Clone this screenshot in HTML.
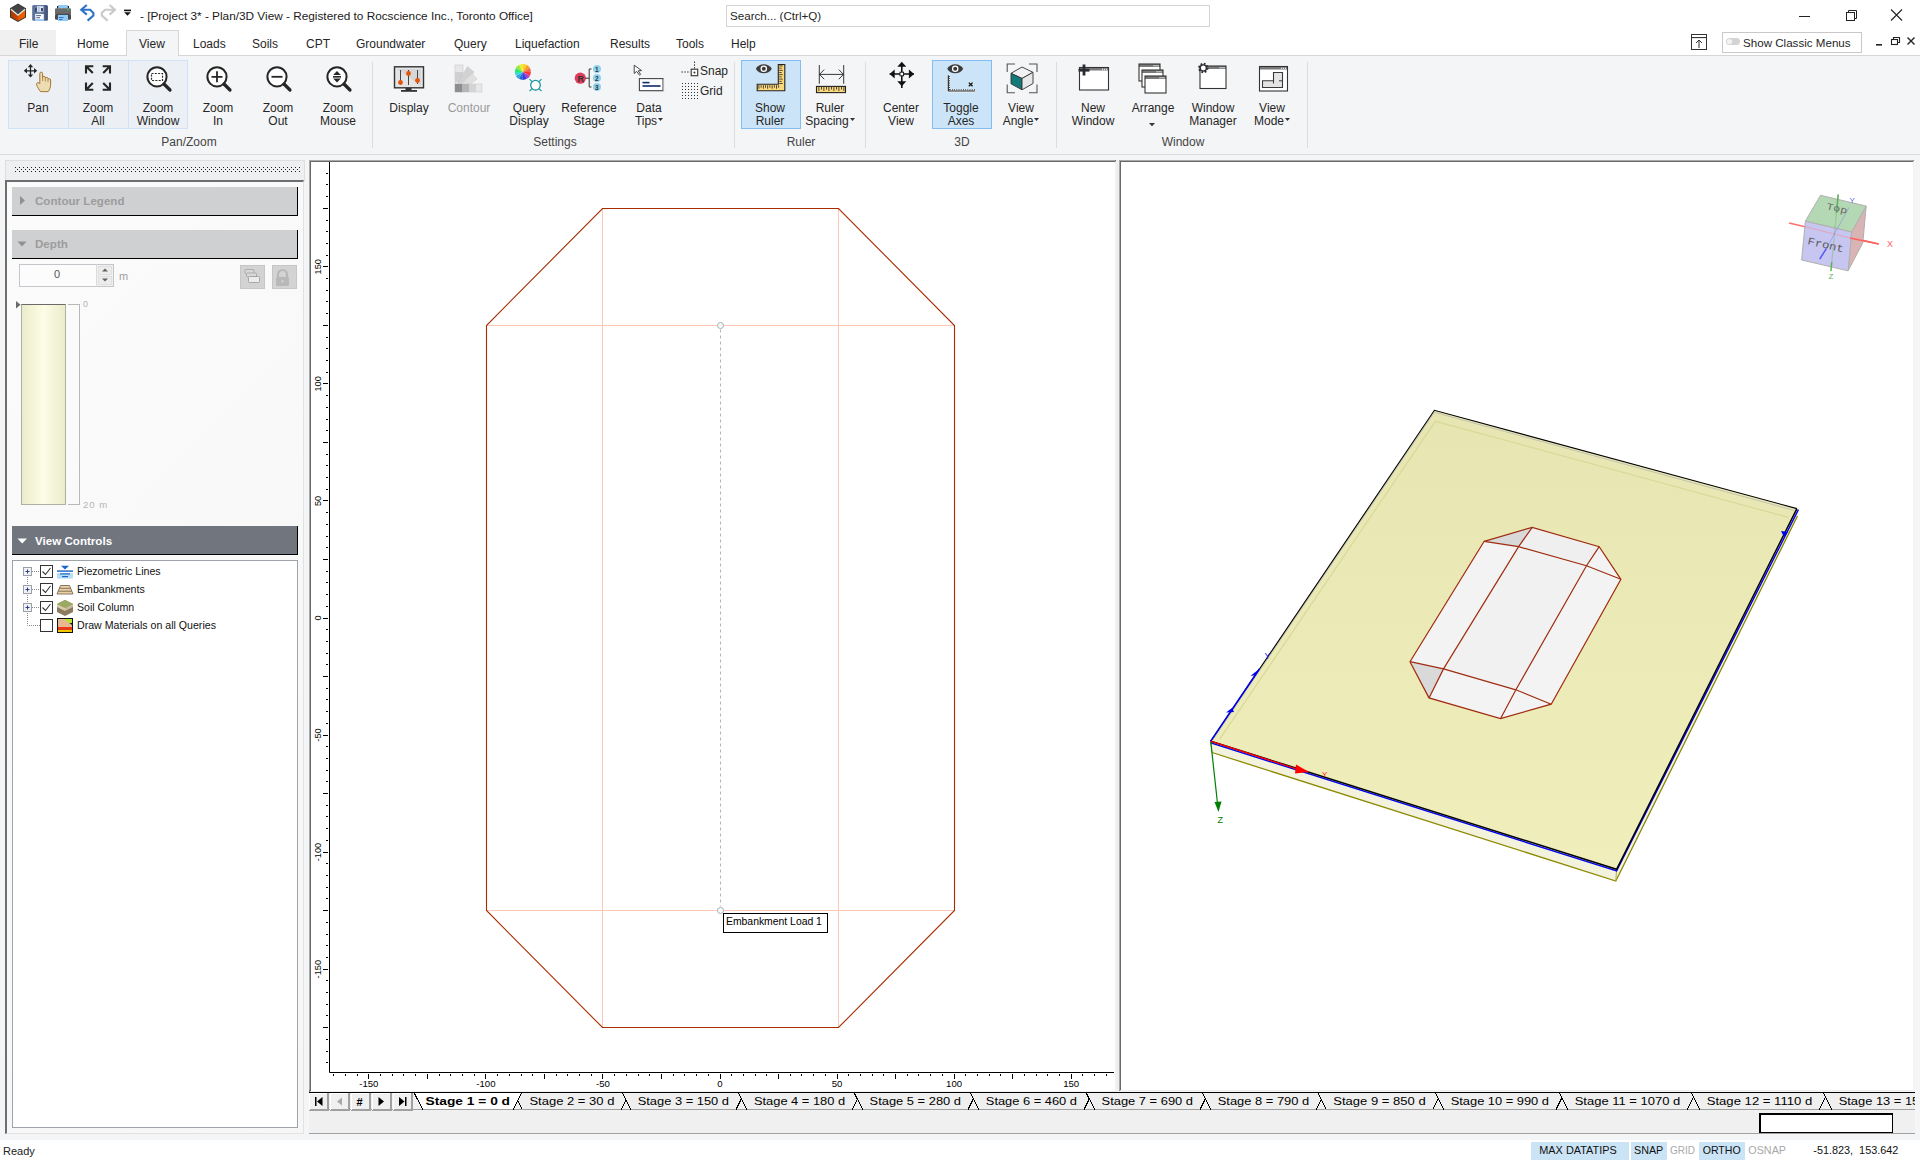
<!DOCTYPE html>
<html><head><meta charset="utf-8">
<style>
*{margin:0;padding:0;box-sizing:border-box}
html,body{width:1920px;height:1160px;overflow:hidden;background:#f4f5f7;font-family:"Liberation Sans",sans-serif;color:#1e1e1e}
.a{position:absolute}
.t{position:absolute;white-space:pre;line-height:1}
svg{position:absolute;overflow:visible}

</style></head><body>
<!-- ===== Title bar ===== -->
<div class="a" style="left:0;top:0;width:1920px;height:56px;background:#fff"></div>
<!-- app icon -->
<svg style="left:0;top:0" width="140" height="30">
 <defs><linearGradient id="orng" x1="0" x2="1"><stop offset="0" stop-color="#a83a00"/><stop offset="0.5" stop-color="#c84800"/><stop offset="0.55" stop-color="#e85800"/><stop offset="1" stop-color="#f06000"/></linearGradient>
 <linearGradient id="savg" x1="0" x2="1"><stop offset="0" stop-color="#5a6e94"/><stop offset="0.5" stop-color="#7088b0"/><stop offset="1" stop-color="#3a4870"/></linearGradient></defs>
 <polygon points="18,3.6 26,8.2 26,17.6 18,22 10,17.6 10,8.2" fill="#333"/>
 <polygon points="10.9,9.3 18,15.8 25.1,9.3 25.1,17 18,21 10.9,17" fill="url(#orng)"/>
 <polygon points="18,4.6 25,8.6 18,14.8 11,8.6" fill="#444"/>
 <path d="M11,9.2 L18,15.2 L25,9.2" fill="none" stroke="#e6eaee" stroke-width="1.3"/>
 <!-- save -->
 <rect x="32.2" y="5" width="15.7" height="15.8" rx="1.5" fill="url(#savg)"/>
 <rect x="37" y="6.2" width="6.5" height="5.6" fill="#dce4f0"/>
 <rect x="37.8" y="6.4" width="2" height="5.2" fill="#b8c8e0"/>
 <rect x="41.2" y="8" width="1.6" height="3.2" fill="#1a2248"/>
 <rect x="35.3" y="8" width="1.2" height="3.8" fill="#262e58"/>
 <rect x="35.2" y="14" width="8.6" height="6.8" fill="#fafbfd"/>
 <rect x="35.2" y="19.2" width="8.6" height="1.6" fill="#8cc4f0"/>
 <rect x="36.2" y="15.2" width="4.8" height="0.9" fill="#3c5080"/><rect x="36.2" y="17.3" width="3.8" height="0.9" fill="#3c5080"/>
 <!-- print -->
 <rect x="58" y="4.9" width="10" height="3.5" rx="0.6" fill="#90caf8"/>
 <rect x="57" y="6" width="1.2" height="2.5" fill="#222"/><rect x="67.8" y="6" width="1.2" height="2.5" fill="#222"/>
 <rect x="55" y="8.2" width="16" height="6.2" rx="1.2" fill="#6a6a6a"/>
 <rect x="55" y="13.8" width="16" height="6" rx="1.5" fill="#4a4a4a"/>
 <rect x="58" y="15" width="10" height="6" fill="#90caf8"/>
 <rect x="59" y="17.1" width="4.5" height="0.9" fill="#2a68b8"/><rect x="59" y="19" width="3.5" height="0.9" fill="#2a68b8"/>
 <circle cx="68" cy="9.6" r="0.9" fill="#22cc55"/>
 <!-- undo -->
 <path d="M86.8,5 L81.2,9.8 L86.8,14.6 M81.2,9.8 H90.2 L93.4,13 V15.5 L87.6,20.6" fill="none" stroke="#2f73c7" stroke-width="2.1"/>
 <!-- redo -->
 <path d="M109.6,5 L115,9.8 L109.6,14.6 M115,9.8 H105 L101.8,13 V15.5 L107.6,20.6" fill="none" stroke="#cacaca" stroke-width="2.1"/>
 <!-- qat dropdown -->
 <rect x="124" y="9.6" width="7" height="1.6" fill="#111"/>
 <polygon points="124.2,12.2 130.8,12.2 127.5,15.8" fill="#111"/>
</svg>
<div class="t" style="left:140px;top:11px;font-size:11.8px;color:#1a1a1a">- [Project 3* - Plan/3D View - Registered to Rocscience Inc., Toronto Office]</div>
<div class="a" style="left:726px;top:5px;width:484px;height:22px;border:1px solid #d4d4d4;background:#fff"></div>
<div class="t" style="left:730px;top:10px;font-size:11.6px;color:#262626">Search... (Ctrl+Q)</div>
<!-- window controls -->
<svg style="left:1780px;top:0" width="140" height="30">
 <rect x="19" y="16" width="11" height="1" fill="#222"/>
 <rect x="66.5" y="12.5" width="8" height="8" fill="none" stroke="#222" stroke-width="1"/>
 <path d="M68.5,12.5 V10.5 H76.5 V18.5 H74.5" fill="none" stroke="#222" stroke-width="1"/>
 <path d="M111,9.5 L122,20.5 M122,9.5 L111,20.5" stroke="#222" stroke-width="1.1"/>
</svg>

<!-- ===== Tab row ===== -->
<div class="a" style="left:0;top:30px;width:56px;height:25px;background:#f0f0f0"></div>
<div class="a" style="left:0;top:55px;width:1920px;height:1px;background:#d6d6d6"></div>
<div class="a" style="left:126px;top:30px;width:53px;height:27px;background:#f4f5f7;border:1px solid #d6d6d6;border-bottom:none"></div>
<div class="t" style="left:19px;top:38px;font-size:12px;color:#262626">File</div>
<div class="t" style="left:77px;top:38px;font-size:12px;color:#262626">Home</div>
<div class="t" style="left:139px;top:38px;font-size:12px;color:#262626">View</div>
<div class="t" style="left:193px;top:38px;font-size:12px;color:#262626">Loads</div>
<div class="t" style="left:252px;top:38px;font-size:12px;color:#262626">Soils</div>
<div class="t" style="left:306px;top:38px;font-size:12px;color:#262626">CPT</div>
<div class="t" style="left:356px;top:38px;font-size:12px;color:#262626">Groundwater</div>
<div class="t" style="left:454px;top:38px;font-size:12px;color:#262626">Query</div>
<div class="t" style="left:515px;top:38px;font-size:12px;color:#262626">Liquefaction</div>
<div class="t" style="left:610px;top:38px;font-size:12px;color:#262626">Results</div>
<div class="t" style="left:676px;top:38px;font-size:12px;color:#262626">Tools</div>
<div class="t" style="left:731px;top:38px;font-size:12px;color:#262626">Help</div>
<!-- right side of tab row -->
<svg style="left:1680px;top:30px" width="240" height="25">
 <rect x="11.5" y="4.5" width="15" height="15" fill="none" stroke="#333" stroke-width="1"/>
 <rect x="11.5" y="7.5" width="15" height="0.1" stroke="#333" stroke-width="1"/>
 <path d="M19,18 V10 M16,13 L19,10 L22,13" fill="none" stroke="#333" stroke-width="1"/>
 <rect x="42.5" y="2.5" width="139" height="20" fill="#fff" stroke="#c8c8c8" stroke-width="1"/>
 <rect x="46" y="8" width="14" height="7" rx="3.5" fill="#d4d4d4"/>
 <circle cx="49.5" cy="11.5" r="2.6" fill="#f4f4f4"/>
 <rect x="196" y="14" width="6" height="1.6" fill="#222"/>
 <rect x="211.5" y="9.5" width="6" height="5" fill="none" stroke="#222" stroke-width="1.1"/>
 <path d="M213.5,9.5 V7.5 H219.5 V12.5 H217.5" fill="none" stroke="#222" stroke-width="1.1"/>
 <path d="M227.5,7.5 L234.5,14.5 M234.5,7.5 L227.5,14.5" stroke="#222" stroke-width="1.4"/>
</svg>
<div class="t" style="left:1743px;top:37px;font-size:11.6px;color:#262626">Show Classic Menus</div>
<div class="a" style="left:0;top:56px;width:1920px;height:98px;background:#f4f5f7"></div>
<div class="a" style="left:0;top:154px;width:1920px;height:1px;background:#d9dadc"></div>
<div class="a" style="left:0;top:155px;width:1920px;height:5px;background:#f4f5f7"></div>
<div class="a" style="left:8px;top:60px;width:180px;height:69px;background:#eceff4;border:1px solid #cfe2f7"></div>
<div class="a" style="left:68px;top:61px;width:1px;height:67px;background:#cfe2f7"></div>
<div class="a" style="left:128px;top:61px;width:1px;height:67px;background:#cfe2f7"></div>
<div class="a" style="left:741px;top:60px;width:60px;height:69px;background:#cce4f7;border:1px solid #86bdf0"></div>
<div class="a" style="left:932px;top:60px;width:60px;height:69px;background:#cce4f7;border:1px solid #86bdf0"></div>
<div class="a" style="left:372px;top:62px;width:1px;height:86px;background:#dcdde0"></div>
<div class="a" style="left:734px;top:62px;width:1px;height:86px;background:#dcdde0"></div>
<div class="a" style="left:865px;top:62px;width:1px;height:86px;background:#dcdde0"></div>
<div class="a" style="left:1056px;top:62px;width:1px;height:86px;background:#dcdde0"></div>
<div class="a" style="left:1307px;top:62px;width:1px;height:86px;background:#dcdde0"></div>
<div class="t" style="left:-22px;width:120px;text-align:center;top:102.0px;font-size:12px;line-height:13px;color:#262626">Pan</div>
<div class="t" style="left:38px;width:120px;text-align:center;top:102.0px;font-size:12px;line-height:13px;color:#262626">Zoom</div>
<div class="t" style="left:38px;width:120px;text-align:center;top:114.5px;font-size:12px;line-height:13px;color:#262626">All</div>
<div class="t" style="left:98px;width:120px;text-align:center;top:102.0px;font-size:12px;line-height:13px;color:#262626">Zoom</div>
<div class="t" style="left:98px;width:120px;text-align:center;top:114.5px;font-size:12px;line-height:13px;color:#262626">Window</div>
<div class="t" style="left:158px;width:120px;text-align:center;top:102.0px;font-size:12px;line-height:13px;color:#262626">Zoom</div>
<div class="t" style="left:158px;width:120px;text-align:center;top:114.5px;font-size:12px;line-height:13px;color:#262626">In</div>
<div class="t" style="left:218px;width:120px;text-align:center;top:102.0px;font-size:12px;line-height:13px;color:#262626">Zoom</div>
<div class="t" style="left:218px;width:120px;text-align:center;top:114.5px;font-size:12px;line-height:13px;color:#262626">Out</div>
<div class="t" style="left:278px;width:120px;text-align:center;top:102.0px;font-size:12px;line-height:13px;color:#262626">Zoom</div>
<div class="t" style="left:278px;width:120px;text-align:center;top:114.5px;font-size:12px;line-height:13px;color:#262626">Mouse</div>
<div class="t" style="left:349px;width:120px;text-align:center;top:102.0px;font-size:12px;line-height:13px;color:#262626">Display</div>
<div class="t" style="left:409px;width:120px;text-align:center;top:102.0px;font-size:12px;line-height:13px;color:#9a9a9a">Contour</div>
<div class="t" style="left:469px;width:120px;text-align:center;top:102.0px;font-size:12px;line-height:13px;color:#262626">Query</div>
<div class="t" style="left:469px;width:120px;text-align:center;top:114.5px;font-size:12px;line-height:13px;color:#262626">Display</div>
<div class="t" style="left:529px;width:120px;text-align:center;top:102.0px;font-size:12px;line-height:13px;color:#262626">Reference</div>
<div class="t" style="left:529px;width:120px;text-align:center;top:114.5px;font-size:12px;line-height:13px;color:#262626">Stage</div>
<div class="t" style="left:589px;width:120px;text-align:center;top:102.0px;font-size:12px;line-height:13px;color:#262626">Data</div>
<div class="t" style="left:589px;width:120px;text-align:center;top:114.5px;font-size:12px;line-height:13px;color:#262626">Tips<svg style="position:relative;display:inline-block;vertical-align:baseline;margin-left:1px;top:-3px" width="5" height="4"><polygon points="0,0 5,0 2.5,3" fill="#333"/></svg></div>
<div class="t" style="left:710px;width:120px;text-align:center;top:102.0px;font-size:12px;line-height:13px;color:#262626">Show</div>
<div class="t" style="left:710px;width:120px;text-align:center;top:114.5px;font-size:12px;line-height:13px;color:#262626">Ruler</div>
<div class="t" style="left:770px;width:120px;text-align:center;top:102.0px;font-size:12px;line-height:13px;color:#262626">Ruler</div>
<div class="t" style="left:770px;width:120px;text-align:center;top:114.5px;font-size:12px;line-height:13px;color:#262626">Spacing<svg style="position:relative;display:inline-block;vertical-align:baseline;margin-left:1px;top:-3px" width="5" height="4"><polygon points="0,0 5,0 2.5,3" fill="#333"/></svg></div>
<div class="t" style="left:841px;width:120px;text-align:center;top:102.0px;font-size:12px;line-height:13px;color:#262626">Center</div>
<div class="t" style="left:841px;width:120px;text-align:center;top:114.5px;font-size:12px;line-height:13px;color:#262626">View</div>
<div class="t" style="left:901px;width:120px;text-align:center;top:102.0px;font-size:12px;line-height:13px;color:#262626">Toggle</div>
<div class="t" style="left:901px;width:120px;text-align:center;top:114.5px;font-size:12px;line-height:13px;color:#262626">Axes</div>
<div class="t" style="left:961px;width:120px;text-align:center;top:102.0px;font-size:12px;line-height:13px;color:#262626">View</div>
<div class="t" style="left:961px;width:120px;text-align:center;top:114.5px;font-size:12px;line-height:13px;color:#262626">Angle<svg style="position:relative;display:inline-block;vertical-align:baseline;margin-left:1px;top:-3px" width="5" height="4"><polygon points="0,0 5,0 2.5,3" fill="#333"/></svg></div>
<div class="t" style="left:1033px;width:120px;text-align:center;top:102.0px;font-size:12px;line-height:13px;color:#262626">New</div>
<div class="t" style="left:1033px;width:120px;text-align:center;top:114.5px;font-size:12px;line-height:13px;color:#262626">Window</div>
<div class="t" style="left:1093px;width:120px;text-align:center;top:102.0px;font-size:12px;line-height:13px;color:#262626">Arrange</div>
<div class="t" style="left:1153px;width:120px;text-align:center;top:102.0px;font-size:12px;line-height:13px;color:#262626">Window</div>
<div class="t" style="left:1153px;width:120px;text-align:center;top:114.5px;font-size:12px;line-height:13px;color:#262626">Manager</div>
<div class="t" style="left:1212px;width:120px;text-align:center;top:102.0px;font-size:12px;line-height:13px;color:#262626">View</div>
<div class="t" style="left:1212px;width:120px;text-align:center;top:114.5px;font-size:12px;line-height:13px;color:#262626">Mode<svg style="position:relative;display:inline-block;vertical-align:baseline;margin-left:1px;top:-3px" width="5" height="4"><polygon points="0,0 5,0 2.5,3" fill="#333"/></svg></div>
<svg style="left:1149px;top:122.5px" width="6" height="4"><polygon points="0,0 6,0 3,3.2" fill="#333"/></svg>
<div class="t" style="left:129px;width:120px;text-align:center;top:136px;font-size:12px;line-height:13px;color:#444">Pan/Zoom</div>
<div class="t" style="left:495px;width:120px;text-align:center;top:136px;font-size:12px;line-height:13px;color:#444">Settings</div>
<div class="t" style="left:741px;width:120px;text-align:center;top:136px;font-size:12px;line-height:13px;color:#444">Ruler</div>
<div class="t" style="left:902px;width:120px;text-align:center;top:136px;font-size:12px;line-height:13px;color:#444">3D</div>
<div class="t" style="left:1123px;width:120px;text-align:center;top:136px;font-size:12px;line-height:13px;color:#444">Window</div>
<div class="t" style="left:700px;top:65px;font-size:12px;line-height:13px;color:#262626">Snap</div>
<div class="t" style="left:700px;top:85px;font-size:12px;line-height:13px;color:#262626">Grid</div>
<svg style="left:22px;top:64px" width="32" height="32">
<path d="M8.5,1 V12.5 M3,6.8 H14" stroke="#262626" stroke-width="1.3"/>
<polygon points="8.5,0 5.8,3.2 11.2,3.2" fill="#262626"/><polygon points="8.5,13.6 5.8,10.4 11.2,10.4" fill="#262626"/>
<polygon points="1.8,6.8 5,4.1 5,9.5" fill="#262626"/><polygon points="15.2,6.8 12,4.1 12,9.5" fill="#262626"/>
<path d="M17.8,9.5 C17.8,7.6 20.6,7.6 20.6,9.5 V13.4 C20.9,12 23.1,12 23.3,13.6 V14.2 C23.6,13 25.8,13 26,14.6 V15.3 C26.4,14.3 28.6,14.5 28.6,16 V20.5 C28.6,23.5 27.6,25.5 26.2,27.6 H18.5 C17,25.5 15.2,22.8 14.6,20.8 C14.2,19.2 15.5,18.2 16.6,18.8 L17.8,19.6 Z" fill="#eedcb4" stroke="#9a6a20" stroke-width="0.9"/>
<path d="M20.6,13.4 V17 M23.3,14.2 V17.5 M26,15.3 V18" stroke="#9a6a20" stroke-width="0.7"/>
</svg>
<svg style="left:82px;top:64px" width="32" height="32" fill="none" stroke="#262626" stroke-width="2.1">
<path d="M4,9.5 V2.2 H11.3 M4.8,3 L10.8,9"/>
<path d="M28,9.5 V2.2 H20.7 M27.2,3 L21.2,9"/>
<path d="M4,18.5 V25.8 H11.3 M4.8,25 L10.8,19"/>
<path d="M28,18.5 V25.8 H20.7 M27.2,25 L21.2,19"/>
</svg>
<svg style="left:142px;top:64px" width="32" height="32">
<circle cx="15" cy="12.8" r="9.6" fill="#fff" stroke="#262626" stroke-width="2"/>
<path d="M22,20 L28,26" stroke="#262626" stroke-width="3.2" stroke-linecap="round"/><rect x="9.5" y="9.5" width="11" height="7" fill="none" stroke="#262626" stroke-width="1.2" stroke-dasharray="2,1.3"/></svg>
<svg style="left:202px;top:64px" width="32" height="32">
<circle cx="15" cy="12.8" r="9.6" fill="#fff" stroke="#262626" stroke-width="2"/>
<path d="M22,20 L28,26" stroke="#262626" stroke-width="3.2" stroke-linecap="round"/><path d="M9.5,12.8 H20.5 M15,7.3 V18.3" stroke="#262626" stroke-width="1.8"/></svg>
<svg style="left:262px;top:64px" width="32" height="32">
<circle cx="15" cy="12.8" r="9.6" fill="#fff" stroke="#262626" stroke-width="2"/>
<path d="M22,20 L28,26" stroke="#262626" stroke-width="3.2" stroke-linecap="round"/><path d="M9.5,12.8 H20.5" stroke="#262626" stroke-width="1.8"/></svg>
<svg style="left:322px;top:64px" width="32" height="32">
<circle cx="15" cy="12.8" r="9.6" fill="#fff" stroke="#262626" stroke-width="2"/>
<path d="M22,20 L28,26" stroke="#262626" stroke-width="3.2" stroke-linecap="round"/><polygon points="15,7 11.2,11 18.8,11" fill="#262626"/><rect x="11" y="12" width="8" height="1.6" fill="#262626"/><polygon points="15,18.6 11.2,14.6 18.8,14.6" fill="#262626"/></svg>
<svg style="left:393px;top:64px" width="32" height="32">
<rect x="1.5" y="2.8" width="29" height="21" fill="#e4e4e4" stroke="#333" stroke-width="1.4"/>
<polygon points="4,5 28,5 28,22" fill="#d6d6d6"/>
<path d="M7.5,6 V20.5 M15.5,6 V21 M24.5,6 V20" stroke="#333" stroke-width="0.9"/>
<circle cx="7.5" cy="18.5" r="2.4" fill="#e2540a"/><circle cx="15.5" cy="9.5" r="2.4" fill="#e2540a"/><circle cx="24.5" cy="16.5" r="2.4" fill="#e2540a"/>
<rect x="12.5" y="24" width="6" height="2.5" fill="#333"/><rect x="8" y="26" width="16" height="1.8" fill="#333"/>
</svg>
<svg style="left:453px;top:64px" width="32" height="32">
<rect x="2" y="1" width="8" height="27" fill="#e6e6e6" stroke="#c8c8c8" stroke-width="0.6"/>
<rect x="2" y="8" width="8" height="10" fill="#cfcfcf"/>
<polygon points="3,22 14.5,2.5 21,8 9,25" fill="#d2d2d2" stroke="#c4c4c4" stroke-width="0.5"/>
<polygon points="4,24 19,9.5 24,15 8,27" fill="#e0e0e0" stroke="#c4c4c4" stroke-width="0.5"/>
<rect x="2" y="20" width="27" height="8" fill="#e8e8e8" stroke="#c8c8c8" stroke-width="0.6"/>
<rect x="2" y="20" width="7" height="8" fill="#8e8e8e"/><rect x="9" y="20" width="7" height="8" fill="#b5b5b5"/><rect x="16" y="20" width="7" height="8" fill="#d4d4d4"/>
</svg>
<svg style="left:513px;top:64px" width="32" height="32"><path d="M9.9,7.9 L9.90,-0.10 A8,8 0 0 1 13.90,0.97 Z" fill="#ffd21e"/><path d="M9.9,7.9 L13.90,0.97 A8,8 0 0 1 16.83,3.90 Z" fill="#ff9a1e"/><path d="M9.9,7.9 L16.83,3.90 A8,8 0 0 1 17.90,7.90 Z" fill="#f06a50"/><path d="M9.9,7.9 L17.90,7.90 A8,8 0 0 1 16.83,11.90 Z" fill="#ff3838"/><path d="M9.9,7.9 L16.83,11.90 A8,8 0 0 1 13.90,14.83 Z" fill="#a43cdc"/><path d="M9.9,7.9 L13.90,14.83 A8,8 0 0 1 9.90,15.90 Z" fill="#3a3ad8"/><path d="M9.9,7.9 L9.90,15.90 A8,8 0 0 1 5.90,14.83 Z" fill="#1e6ad2"/><path d="M9.9,7.9 L5.90,14.83 A8,8 0 0 1 2.97,11.90 Z" fill="#3a9af0"/><path d="M9.9,7.9 L2.97,11.90 A8,8 0 0 1 1.90,7.90 Z" fill="#32e0c8"/><path d="M9.9,7.9 L1.90,7.90 A8,8 0 0 1 2.97,3.90 Z" fill="#2ee86a"/><path d="M9.9,7.9 L2.97,3.90 A8,8 0 0 1 5.90,0.97 Z" fill="#9ae63a"/><path d="M9.9,7.9 L5.90,0.97 A8,8 0 0 1 9.90,-0.10 Z" fill="#e6f03a"/>
<circle cx="22.5" cy="21.2" r="4.8" fill="#fff" stroke="#1e9aa0" stroke-width="1.3"/>
<path d="M16.5,15.2 L19.2,17.9 M28.5,15.2 L25.8,17.9 M16.5,27.2 L19.2,24.5 M28.5,27.2 L25.8,24.5" stroke="#1e9aa0" stroke-width="1.2"/>
</svg>
<svg style="left:573px;top:64px" width="32" height="32">
<circle cx="7.3" cy="14.2" r="5.6" fill="#e03c5c"/>
<text x="4.6" y="17.6" font-family="Liberation Sans" font-weight="bold" font-size="9" fill="#333">R</text>
<path d="M12.5,14.2 H16 M18.5,5 H16.2 V23 H18.5" fill="none" stroke="#333" stroke-width="1"/>
<circle cx="24" cy="5" r="4" fill="#8fd2ee"/><circle cx="24" cy="14" r="4" fill="#8fd2ee"/><circle cx="24" cy="23" r="4" fill="#8fd2ee"/>
<text x="22" y="7.5" font-family="Liberation Sans" font-weight="bold" font-size="6.5" fill="#333">1</text>
<text x="22" y="16.5" font-family="Liberation Sans" font-weight="bold" font-size="6.5" fill="#333">2</text>
<text x="22" y="25.5" font-family="Liberation Sans" font-weight="bold" font-size="6.5" fill="#333">3</text>
</svg>
<svg style="left:633px;top:64px" width="32" height="32">
<path d="M1.2,1.2 L1.2,9.5 L3.6,7.4 L6.5,11.2 L7.6,10.4 L5.2,6.8 L8.6,6.6 Z" fill="#fff" stroke="#333" stroke-width="0.9"/>
<rect x="6.4" y="14.6" width="23.6" height="12" fill="#fff" stroke="#444" stroke-width="1.1"/>
<rect x="9.5" y="17.8" width="7" height="1.6" fill="#102c6c"/><rect x="9.5" y="21.2" width="18" height="1.6" fill="#102c6c"/>
<path d="M30.6,15.5 V27.3 H7.5" fill="none" stroke="#bbb" stroke-width="0.8"/>
</svg>
<svg style="left:681px;top:61px" width="20" height="40">
<path d="M13.5,0.5 V7.5 M0.5,11 H9" stroke="#333" stroke-width="1" stroke-dasharray="1.5,1.3"/>
<rect x="10.2" y="8.2" width="6.5" height="6.5" fill="#fff" stroke="#333" stroke-width="1.1"/>
<circle cx="13.45" cy="11.45" r="1" fill="#333"/><rect x="1" y="22" width="1" height="1" fill="#333"/><rect x="1" y="25" width="1" height="1" fill="#333"/><rect x="1" y="28" width="1" height="1" fill="#333"/><rect x="1" y="31" width="1" height="1" fill="#333"/><rect x="1" y="34" width="1" height="1" fill="#333"/><rect x="1" y="37" width="1" height="1" fill="#333"/><rect x="4" y="22" width="1" height="1" fill="#333"/><rect x="4" y="25" width="1" height="1" fill="#333"/><rect x="4" y="28" width="1" height="1" fill="#333"/><rect x="4" y="31" width="1" height="1" fill="#333"/><rect x="4" y="34" width="1" height="1" fill="#333"/><rect x="4" y="37" width="1" height="1" fill="#333"/><rect x="7" y="22" width="1" height="1" fill="#333"/><rect x="7" y="25" width="1" height="1" fill="#333"/><rect x="7" y="28" width="1" height="1" fill="#333"/><rect x="7" y="31" width="1" height="1" fill="#333"/><rect x="7" y="34" width="1" height="1" fill="#333"/><rect x="7" y="37" width="1" height="1" fill="#333"/><rect x="10" y="22" width="1" height="1" fill="#333"/><rect x="10" y="25" width="1" height="1" fill="#333"/><rect x="10" y="28" width="1" height="1" fill="#333"/><rect x="10" y="31" width="1" height="1" fill="#333"/><rect x="10" y="34" width="1" height="1" fill="#333"/><rect x="10" y="37" width="1" height="1" fill="#333"/><rect x="13" y="22" width="1" height="1" fill="#333"/><rect x="13" y="25" width="1" height="1" fill="#333"/><rect x="13" y="28" width="1" height="1" fill="#333"/><rect x="13" y="31" width="1" height="1" fill="#333"/><rect x="13" y="34" width="1" height="1" fill="#333"/><rect x="13" y="37" width="1" height="1" fill="#333"/><rect x="16" y="22" width="1" height="1" fill="#333"/><rect x="16" y="25" width="1" height="1" fill="#333"/><rect x="16" y="28" width="1" height="1" fill="#333"/><rect x="16" y="31" width="1" height="1" fill="#333"/><rect x="16" y="34" width="1" height="1" fill="#333"/><rect x="16" y="37" width="1" height="1" fill="#333"/>
</svg>
<svg style="left:755px;top:64px" width="32" height="32"><path d="M0.8,4.7 C3.8,-1.2999999999999998 13.8,-1.2999999999999998 16.8,4.7 C13.8,10.7 3.8,10.7 0.8,4.7 Z" fill="#3c3c3c"/><circle cx="8.8" cy="4.7" r="3.3" fill="#fff"/><circle cx="8.8" cy="4.7" r="2" fill="#3c3c3c"/>
<path d="M23.3,0.5 H29.8 V26.7 H2.2 V20.3 H23.3 Z" fill="#fbd97a" stroke="#222" stroke-width="1.1"/><rect x="3.5" y="21.2" width="0.8" height="3.5" fill="#222"/><rect x="5.7" y="21.2" width="0.8" height="2.5" fill="#222"/><rect x="7.9" y="21.2" width="0.8" height="3.5" fill="#222"/><rect x="10.1" y="21.2" width="0.8" height="2.5" fill="#222"/><rect x="12.3" y="21.2" width="0.8" height="3.5" fill="#222"/><rect x="14.5" y="21.2" width="0.8" height="2.5" fill="#222"/><rect x="16.7" y="21.2" width="0.8" height="3.5" fill="#222"/><rect x="18.9" y="21.2" width="0.8" height="2.5" fill="#222"/><rect x="21.1" y="21.2" width="0.8" height="3.5" fill="#222"/><rect x="23.3" y="21.2" width="0.8" height="2.5" fill="#222"/><rect x="24.2" y="1.5" width="3.5" height="0.8" fill="#222"/><rect x="24.2" y="3.7" width="2.5" height="0.8" fill="#222"/><rect x="24.2" y="5.9" width="3.5" height="0.8" fill="#222"/><rect x="24.2" y="8.1" width="2.5" height="0.8" fill="#222"/><rect x="24.2" y="10.3" width="3.5" height="0.8" fill="#222"/><rect x="24.2" y="12.5" width="2.5" height="0.8" fill="#222"/><rect x="24.2" y="14.7" width="3.5" height="0.8" fill="#222"/><rect x="24.2" y="16.9" width="2.5" height="0.8" fill="#222"/><rect x="24.2" y="19.1" width="3.5" height="0.8" fill="#222"/>
</svg>
<svg style="left:815px;top:64px" width="32" height="32">
<path d="M4.3,1 V19.8 M28.7,1 V19.8 M4.5,10.4 H28.5 M9.2,5.6 L4.5,10.4 L9.2,15.2 M23.8,5.6 L28.5,10.4 L23.8,15.2" fill="none" stroke="#222" stroke-width="0.9"/>
<rect x="1.5" y="22.4" width="29" height="6.2" fill="#fbd97a" stroke="#222" stroke-width="1.1"/><rect x="3.5" y="23" width="0.8" height="4" fill="#222"/><rect x="6.0" y="23" width="0.8" height="2.5" fill="#222"/><rect x="8.5" y="23" width="0.8" height="4" fill="#222"/><rect x="11.0" y="23" width="0.8" height="2.5" fill="#222"/><rect x="13.5" y="23" width="0.8" height="4" fill="#222"/><rect x="16.0" y="23" width="0.8" height="2.5" fill="#222"/><rect x="18.5" y="23" width="0.8" height="4" fill="#222"/><rect x="21.0" y="23" width="0.8" height="2.5" fill="#222"/><rect x="23.5" y="23" width="0.8" height="4" fill="#222"/><rect x="26.0" y="23" width="0.8" height="2.5" fill="#222"/><rect x="28.5" y="23" width="0.8" height="4" fill="#222"/>
</svg>
<svg style="left:885px;top:64px" width="32" height="32">
<path d="M16.8,1 V24 M4.6,10 H29" stroke="#111" stroke-width="1.6"/>
<polygon points="16.8,-2.3 12.3,2.8 21.3,2.8" fill="#111"/><polygon points="16.8,22.3 12.3,17.2 21.3,17.2" fill="#111"/>
<polygon points="4.6,10 9.7,5.5 9.7,14.5" fill="#111"/><polygon points="29,10 23.9,5.5 23.9,14.5" fill="#111"/>
<rect x="15" y="8.2" width="3.6" height="3.6" fill="#fff" stroke="#111" stroke-width="0.9"/>
</svg>
<svg style="left:946px;top:64px" width="32" height="32"><path d="M1.2,4.8 C4.2,-1.2000000000000002 14.2,-1.2000000000000002 17.2,4.8 C14.2,10.8 4.2,10.8 1.2,4.8 Z" fill="#3c3c3c"/><circle cx="9.2" cy="4.8" r="3.3" fill="#fff"/><circle cx="9.2" cy="4.8" r="2" fill="#3c3c3c"/>
<path d="M2.3,11.3 V27 H28.8" fill="none" stroke="#fff" stroke-width="2.6"/>
<path d="M2.3,11.3 V27 H28.8" fill="none" stroke="#222" stroke-width="1.2"/><rect x="3.8" y="25.2" width="0.8" height="1.2" fill="#222"/><rect x="6.0" y="25.2" width="0.8" height="1.2" fill="#222"/><rect x="8.2" y="25.2" width="0.8" height="1.2" fill="#222"/><rect x="10.4" y="25.2" width="0.8" height="1.2" fill="#222"/><rect x="12.6" y="25.2" width="0.8" height="1.2" fill="#222"/><rect x="14.8" y="25.2" width="0.8" height="1.2" fill="#222"/><rect x="17.0" y="25.2" width="0.8" height="1.2" fill="#222"/><rect x="19.2" y="25.2" width="0.8" height="1.2" fill="#222"/><rect x="21.4" y="25.2" width="0.8" height="1.2" fill="#222"/><rect x="23.6" y="25.2" width="0.8" height="1.2" fill="#222"/><rect x="25.8" y="25.2" width="0.8" height="1.2" fill="#222"/><rect x="28.0" y="25.2" width="0.8" height="1.2" fill="#222"/><rect x="2.8" y="12.0" width="1.2" height="0.8" fill="#222"/><rect x="2.8" y="14.2" width="1.2" height="0.8" fill="#222"/><rect x="2.8" y="16.4" width="1.2" height="0.8" fill="#222"/><rect x="2.8" y="18.6" width="1.2" height="0.8" fill="#222"/><rect x="2.8" y="20.8" width="1.2" height="0.8" fill="#222"/><rect x="2.8" y="23.0" width="1.2" height="0.8" fill="#222"/><rect x="2.8" y="25.2" width="1.2" height="0.8" fill="#222"/>
<path d="M22.8,18.6 L26.6,22.2 M26.6,18.6 L22.8,22.2" stroke="#111" stroke-width="1.3"/>
</svg>
<svg style="left:1006px;top:64px" width="32" height="32">
<path d="M1.2,8 V0 H9 M23,0 H31 V8 M1.2,20.5 V28.7 H9 M23,28.7 H31 V20.5" fill="none" stroke="#555" stroke-width="1.1"/>
<polygon points="5,9.3 16,3 27,8.3 16,14.5" fill="#f2f2f2" stroke="#333" stroke-width="0.9"/>
<polygon points="5,9.3 16,14.5 16,25.8 5,19.8" fill="#137a7a" stroke="#333" stroke-width="0.9"/>
<polygon points="16,14.5 27,8.3 27,19.5 16,25.8" fill="#e8e8e8" stroke="#333" stroke-width="0.9"/>
</svg>
<svg style="left:1077px;top:64px" width="32" height="32">
<rect x="2.5" y="3.5" width="29" height="22.5" fill="#fff"/><rect x="2.5" y="3.5" width="29" height="3" fill="#7a7a7a"/><rect x="29.0" y="4.7" width="1.1" height="1.1" fill="#fff"/><rect x="27.0" y="4.7" width="1.1" height="1.1" fill="#fff"/><rect x="25.0" y="4.7" width="1.1" height="1.1" fill="#fff"/><rect x="2.5" y="3.5" width="29" height="22.5" fill="none" stroke="#333" stroke-width="1.1"/>
<rect x="1.5" y="4.8" width="11" height="2.8" fill="#2b2b33"/><rect x="5.6" y="0.5" width="2.8" height="11" fill="#2b2b33"/>
</svg>
<svg style="left:1137px;top:64px" width="32" height="32">
<rect x="2" y="0" width="21" height="17" fill="#fff"/><rect x="2" y="0" width="21" height="3" fill="#7a7a7a"/><rect x="20.5" y="1.2" width="1.1" height="1.1" fill="#fff"/><rect x="18.5" y="1.2" width="1.1" height="1.1" fill="#fff"/><rect x="16.5" y="1.2" width="1.1" height="1.1" fill="#fff"/><rect x="2" y="0" width="21" height="17" fill="none" stroke="#333" stroke-width="1.1"/><rect x="5" y="6" width="21" height="17" fill="#fff"/><rect x="5" y="6" width="21" height="3" fill="#7a7a7a"/><rect x="23.5" y="7.2" width="1.1" height="1.1" fill="#fff"/><rect x="21.5" y="7.2" width="1.1" height="1.1" fill="#fff"/><rect x="19.5" y="7.2" width="1.1" height="1.1" fill="#fff"/><rect x="5" y="6" width="21" height="17" fill="none" stroke="#333" stroke-width="1.1"/><rect x="8" y="12" width="21" height="17" fill="#fff"/><rect x="8" y="12" width="21" height="3" fill="#7a7a7a"/><rect x="26.5" y="13.2" width="1.1" height="1.1" fill="#fff"/><rect x="24.5" y="13.2" width="1.1" height="1.1" fill="#fff"/><rect x="22.5" y="13.2" width="1.1" height="1.1" fill="#fff"/><rect x="8" y="12" width="21" height="17" fill="none" stroke="#333" stroke-width="1.1"/>
</svg>
<svg style="left:1197px;top:64px" width="32" height="32">
<rect x="3" y="2" width="26" height="22.5" fill="#fff"/><rect x="3" y="2" width="26" height="3" fill="#7a7a7a"/><rect x="26.5" y="3.2" width="1.1" height="1.1" fill="#fff"/><rect x="24.5" y="3.2" width="1.1" height="1.1" fill="#fff"/><rect x="22.5" y="3.2" width="1.1" height="1.1" fill="#fff"/><rect x="3" y="2" width="26" height="22.5" fill="none" stroke="#333" stroke-width="1.1"/><circle cx="6.3" cy="4" r="4.2" fill="none" stroke="#2b2b33" stroke-width="2" stroke-dasharray="1.7,1.6"/><circle cx="6.3" cy="4" r="3.1" fill="#fff" stroke="#2b2b33" stroke-width="1.3"/>
</svg>
<svg style="left:1257px;top:64px" width="32" height="32">
<rect x="2.5" y="2.5" width="28" height="24.5" fill="#fff"/><rect x="2.5" y="2.5" width="28" height="3" fill="#7a7a7a"/><rect x="28.0" y="3.7" width="1.1" height="1.1" fill="#fff"/><rect x="26.0" y="3.7" width="1.1" height="1.1" fill="#fff"/><rect x="24.0" y="3.7" width="1.1" height="1.1" fill="#fff"/><rect x="2.5" y="2.5" width="28" height="24.5" fill="none" stroke="#333" stroke-width="1.1"/>
<path d="M16.5,8.5 H25.5 V23.5 H5.5 V16.8 H16.5 Z" fill="#e4e4e4" stroke="#3a3a3a" stroke-width="1.1"/>
<path d="M16.5,16.8 V19.5 M22,16.8 H25.5" stroke="#3a3a3a" stroke-width="1"/>
</svg>
<div class="a" style="left:5px;top:160px;width:300px;height:21px;background:#eeeff1;border:1px solid #dddee0"></div>
<svg style="left:0;top:0" width="310" height="190"><rect x="15" y="167" width="1" height="1" fill="#222"/><rect x="15" y="171" width="1" height="1" fill="#222"/><rect x="19" y="167" width="1" height="1" fill="#222"/><rect x="19" y="171" width="1" height="1" fill="#222"/><rect x="23" y="167" width="1" height="1" fill="#222"/><rect x="23" y="171" width="1" height="1" fill="#222"/><rect x="27" y="167" width="1" height="1" fill="#222"/><rect x="27" y="171" width="1" height="1" fill="#222"/><rect x="31" y="167" width="1" height="1" fill="#222"/><rect x="31" y="171" width="1" height="1" fill="#222"/><rect x="35" y="167" width="1" height="1" fill="#222"/><rect x="35" y="171" width="1" height="1" fill="#222"/><rect x="39" y="167" width="1" height="1" fill="#222"/><rect x="39" y="171" width="1" height="1" fill="#222"/><rect x="43" y="167" width="1" height="1" fill="#222"/><rect x="43" y="171" width="1" height="1" fill="#222"/><rect x="47" y="167" width="1" height="1" fill="#222"/><rect x="47" y="171" width="1" height="1" fill="#222"/><rect x="51" y="167" width="1" height="1" fill="#222"/><rect x="51" y="171" width="1" height="1" fill="#222"/><rect x="55" y="167" width="1" height="1" fill="#222"/><rect x="55" y="171" width="1" height="1" fill="#222"/><rect x="59" y="167" width="1" height="1" fill="#222"/><rect x="59" y="171" width="1" height="1" fill="#222"/><rect x="63" y="167" width="1" height="1" fill="#222"/><rect x="63" y="171" width="1" height="1" fill="#222"/><rect x="67" y="167" width="1" height="1" fill="#222"/><rect x="67" y="171" width="1" height="1" fill="#222"/><rect x="71" y="167" width="1" height="1" fill="#222"/><rect x="71" y="171" width="1" height="1" fill="#222"/><rect x="75" y="167" width="1" height="1" fill="#222"/><rect x="75" y="171" width="1" height="1" fill="#222"/><rect x="79" y="167" width="1" height="1" fill="#222"/><rect x="79" y="171" width="1" height="1" fill="#222"/><rect x="83" y="167" width="1" height="1" fill="#222"/><rect x="83" y="171" width="1" height="1" fill="#222"/><rect x="87" y="167" width="1" height="1" fill="#222"/><rect x="87" y="171" width="1" height="1" fill="#222"/><rect x="91" y="167" width="1" height="1" fill="#222"/><rect x="91" y="171" width="1" height="1" fill="#222"/><rect x="95" y="167" width="1" height="1" fill="#222"/><rect x="95" y="171" width="1" height="1" fill="#222"/><rect x="99" y="167" width="1" height="1" fill="#222"/><rect x="99" y="171" width="1" height="1" fill="#222"/><rect x="103" y="167" width="1" height="1" fill="#222"/><rect x="103" y="171" width="1" height="1" fill="#222"/><rect x="107" y="167" width="1" height="1" fill="#222"/><rect x="107" y="171" width="1" height="1" fill="#222"/><rect x="111" y="167" width="1" height="1" fill="#222"/><rect x="111" y="171" width="1" height="1" fill="#222"/><rect x="115" y="167" width="1" height="1" fill="#222"/><rect x="115" y="171" width="1" height="1" fill="#222"/><rect x="119" y="167" width="1" height="1" fill="#222"/><rect x="119" y="171" width="1" height="1" fill="#222"/><rect x="123" y="167" width="1" height="1" fill="#222"/><rect x="123" y="171" width="1" height="1" fill="#222"/><rect x="127" y="167" width="1" height="1" fill="#222"/><rect x="127" y="171" width="1" height="1" fill="#222"/><rect x="131" y="167" width="1" height="1" fill="#222"/><rect x="131" y="171" width="1" height="1" fill="#222"/><rect x="135" y="167" width="1" height="1" fill="#222"/><rect x="135" y="171" width="1" height="1" fill="#222"/><rect x="139" y="167" width="1" height="1" fill="#222"/><rect x="139" y="171" width="1" height="1" fill="#222"/><rect x="143" y="167" width="1" height="1" fill="#222"/><rect x="143" y="171" width="1" height="1" fill="#222"/><rect x="147" y="167" width="1" height="1" fill="#222"/><rect x="147" y="171" width="1" height="1" fill="#222"/><rect x="151" y="167" width="1" height="1" fill="#222"/><rect x="151" y="171" width="1" height="1" fill="#222"/><rect x="155" y="167" width="1" height="1" fill="#222"/><rect x="155" y="171" width="1" height="1" fill="#222"/><rect x="159" y="167" width="1" height="1" fill="#222"/><rect x="159" y="171" width="1" height="1" fill="#222"/><rect x="163" y="167" width="1" height="1" fill="#222"/><rect x="163" y="171" width="1" height="1" fill="#222"/><rect x="167" y="167" width="1" height="1" fill="#222"/><rect x="167" y="171" width="1" height="1" fill="#222"/><rect x="171" y="167" width="1" height="1" fill="#222"/><rect x="171" y="171" width="1" height="1" fill="#222"/><rect x="175" y="167" width="1" height="1" fill="#222"/><rect x="175" y="171" width="1" height="1" fill="#222"/><rect x="179" y="167" width="1" height="1" fill="#222"/><rect x="179" y="171" width="1" height="1" fill="#222"/><rect x="183" y="167" width="1" height="1" fill="#222"/><rect x="183" y="171" width="1" height="1" fill="#222"/><rect x="187" y="167" width="1" height="1" fill="#222"/><rect x="187" y="171" width="1" height="1" fill="#222"/><rect x="191" y="167" width="1" height="1" fill="#222"/><rect x="191" y="171" width="1" height="1" fill="#222"/><rect x="195" y="167" width="1" height="1" fill="#222"/><rect x="195" y="171" width="1" height="1" fill="#222"/><rect x="199" y="167" width="1" height="1" fill="#222"/><rect x="199" y="171" width="1" height="1" fill="#222"/><rect x="203" y="167" width="1" height="1" fill="#222"/><rect x="203" y="171" width="1" height="1" fill="#222"/><rect x="207" y="167" width="1" height="1" fill="#222"/><rect x="207" y="171" width="1" height="1" fill="#222"/><rect x="211" y="167" width="1" height="1" fill="#222"/><rect x="211" y="171" width="1" height="1" fill="#222"/><rect x="215" y="167" width="1" height="1" fill="#222"/><rect x="215" y="171" width="1" height="1" fill="#222"/><rect x="219" y="167" width="1" height="1" fill="#222"/><rect x="219" y="171" width="1" height="1" fill="#222"/><rect x="223" y="167" width="1" height="1" fill="#222"/><rect x="223" y="171" width="1" height="1" fill="#222"/><rect x="227" y="167" width="1" height="1" fill="#222"/><rect x="227" y="171" width="1" height="1" fill="#222"/><rect x="231" y="167" width="1" height="1" fill="#222"/><rect x="231" y="171" width="1" height="1" fill="#222"/><rect x="235" y="167" width="1" height="1" fill="#222"/><rect x="235" y="171" width="1" height="1" fill="#222"/><rect x="239" y="167" width="1" height="1" fill="#222"/><rect x="239" y="171" width="1" height="1" fill="#222"/><rect x="243" y="167" width="1" height="1" fill="#222"/><rect x="243" y="171" width="1" height="1" fill="#222"/><rect x="247" y="167" width="1" height="1" fill="#222"/><rect x="247" y="171" width="1" height="1" fill="#222"/><rect x="251" y="167" width="1" height="1" fill="#222"/><rect x="251" y="171" width="1" height="1" fill="#222"/><rect x="255" y="167" width="1" height="1" fill="#222"/><rect x="255" y="171" width="1" height="1" fill="#222"/><rect x="259" y="167" width="1" height="1" fill="#222"/><rect x="259" y="171" width="1" height="1" fill="#222"/><rect x="263" y="167" width="1" height="1" fill="#222"/><rect x="263" y="171" width="1" height="1" fill="#222"/><rect x="267" y="167" width="1" height="1" fill="#222"/><rect x="267" y="171" width="1" height="1" fill="#222"/><rect x="271" y="167" width="1" height="1" fill="#222"/><rect x="271" y="171" width="1" height="1" fill="#222"/><rect x="275" y="167" width="1" height="1" fill="#222"/><rect x="275" y="171" width="1" height="1" fill="#222"/><rect x="279" y="167" width="1" height="1" fill="#222"/><rect x="279" y="171" width="1" height="1" fill="#222"/><rect x="283" y="167" width="1" height="1" fill="#222"/><rect x="283" y="171" width="1" height="1" fill="#222"/><rect x="287" y="167" width="1" height="1" fill="#222"/><rect x="287" y="171" width="1" height="1" fill="#222"/><rect x="291" y="167" width="1" height="1" fill="#222"/><rect x="291" y="171" width="1" height="1" fill="#222"/><rect x="295" y="167" width="1" height="1" fill="#222"/><rect x="295" y="171" width="1" height="1" fill="#222"/><rect x="299" y="167" width="1" height="1" fill="#222"/><rect x="299" y="171" width="1" height="1" fill="#222"/><rect x="17" y="169" width="1" height="1" fill="#222"/><rect x="21" y="169" width="1" height="1" fill="#222"/><rect x="25" y="169" width="1" height="1" fill="#222"/><rect x="29" y="169" width="1" height="1" fill="#222"/><rect x="33" y="169" width="1" height="1" fill="#222"/><rect x="37" y="169" width="1" height="1" fill="#222"/><rect x="41" y="169" width="1" height="1" fill="#222"/><rect x="45" y="169" width="1" height="1" fill="#222"/><rect x="49" y="169" width="1" height="1" fill="#222"/><rect x="53" y="169" width="1" height="1" fill="#222"/><rect x="57" y="169" width="1" height="1" fill="#222"/><rect x="61" y="169" width="1" height="1" fill="#222"/><rect x="65" y="169" width="1" height="1" fill="#222"/><rect x="69" y="169" width="1" height="1" fill="#222"/><rect x="73" y="169" width="1" height="1" fill="#222"/><rect x="77" y="169" width="1" height="1" fill="#222"/><rect x="81" y="169" width="1" height="1" fill="#222"/><rect x="85" y="169" width="1" height="1" fill="#222"/><rect x="89" y="169" width="1" height="1" fill="#222"/><rect x="93" y="169" width="1" height="1" fill="#222"/><rect x="97" y="169" width="1" height="1" fill="#222"/><rect x="101" y="169" width="1" height="1" fill="#222"/><rect x="105" y="169" width="1" height="1" fill="#222"/><rect x="109" y="169" width="1" height="1" fill="#222"/><rect x="113" y="169" width="1" height="1" fill="#222"/><rect x="117" y="169" width="1" height="1" fill="#222"/><rect x="121" y="169" width="1" height="1" fill="#222"/><rect x="125" y="169" width="1" height="1" fill="#222"/><rect x="129" y="169" width="1" height="1" fill="#222"/><rect x="133" y="169" width="1" height="1" fill="#222"/><rect x="137" y="169" width="1" height="1" fill="#222"/><rect x="141" y="169" width="1" height="1" fill="#222"/><rect x="145" y="169" width="1" height="1" fill="#222"/><rect x="149" y="169" width="1" height="1" fill="#222"/><rect x="153" y="169" width="1" height="1" fill="#222"/><rect x="157" y="169" width="1" height="1" fill="#222"/><rect x="161" y="169" width="1" height="1" fill="#222"/><rect x="165" y="169" width="1" height="1" fill="#222"/><rect x="169" y="169" width="1" height="1" fill="#222"/><rect x="173" y="169" width="1" height="1" fill="#222"/><rect x="177" y="169" width="1" height="1" fill="#222"/><rect x="181" y="169" width="1" height="1" fill="#222"/><rect x="185" y="169" width="1" height="1" fill="#222"/><rect x="189" y="169" width="1" height="1" fill="#222"/><rect x="193" y="169" width="1" height="1" fill="#222"/><rect x="197" y="169" width="1" height="1" fill="#222"/><rect x="201" y="169" width="1" height="1" fill="#222"/><rect x="205" y="169" width="1" height="1" fill="#222"/><rect x="209" y="169" width="1" height="1" fill="#222"/><rect x="213" y="169" width="1" height="1" fill="#222"/><rect x="217" y="169" width="1" height="1" fill="#222"/><rect x="221" y="169" width="1" height="1" fill="#222"/><rect x="225" y="169" width="1" height="1" fill="#222"/><rect x="229" y="169" width="1" height="1" fill="#222"/><rect x="233" y="169" width="1" height="1" fill="#222"/><rect x="237" y="169" width="1" height="1" fill="#222"/><rect x="241" y="169" width="1" height="1" fill="#222"/><rect x="245" y="169" width="1" height="1" fill="#222"/><rect x="249" y="169" width="1" height="1" fill="#222"/><rect x="253" y="169" width="1" height="1" fill="#222"/><rect x="257" y="169" width="1" height="1" fill="#222"/><rect x="261" y="169" width="1" height="1" fill="#222"/><rect x="265" y="169" width="1" height="1" fill="#222"/><rect x="269" y="169" width="1" height="1" fill="#222"/><rect x="273" y="169" width="1" height="1" fill="#222"/><rect x="277" y="169" width="1" height="1" fill="#222"/><rect x="281" y="169" width="1" height="1" fill="#222"/><rect x="285" y="169" width="1" height="1" fill="#222"/><rect x="289" y="169" width="1" height="1" fill="#222"/><rect x="293" y="169" width="1" height="1" fill="#222"/><rect x="297" y="169" width="1" height="1" fill="#222"/></svg>
<div class="a" style="left:5px;top:180px;width:299px;height:954px;background:linear-gradient(135deg,#fbfbfb,#f6f6f6);border-top:2px solid #6e6e6e;border-left:2px solid #6e6e6e;border-right:1px solid #e2e2e2;border-bottom:1px solid #e2e2e2"></div>
<div class="a" style="left:12px;top:187px;width:286px;height:29px;background:#cfd0d2;border-right:1px solid #000;border-bottom:1px solid #000"></div>
<svg style="left:20px;top:196px" width="8" height="12"><polygon points="0,0 0,9 5,4.5" fill="#909090"/></svg>
<div class="t" style="left:35px;top:194px;font-size:11.6px;font-weight:bold;color:#9c9c9c;line-height:14px">Contour Legend</div>
<div class="a" style="left:12px;top:230px;width:286px;height:29px;background:#cfd0d2;border-right:1px solid #000;border-bottom:1px solid #000"></div>
<svg style="left:17px;top:241px" width="12" height="8"><polygon points="0.5,0.5 9.5,0.5 5,5.5" fill="#909090"/></svg>
<div class="t" style="left:35px;top:237px;font-size:11.6px;font-weight:bold;color:#9c9c9c;line-height:14px">Depth</div>
<div class="a" style="left:19px;top:264px;width:95px;height:23px;background:#fcfcfc;border:1px solid #c3c6ca"></div>
<div class="a" style="left:96px;top:264px;width:18px;height:23px;background:#f0f0f0;border:1px solid #c3c6ca;border-left:1px solid #dcdcdc"></div>
<div class="a" style="left:98px;top:266px;width:14px;height:9px;background:#ececec;border:1px solid #e0e0e0"></div>
<div class="a" style="left:98px;top:276px;width:14px;height:9px;background:#ececec;border:1px solid #e0e0e0"></div>
<svg style="left:100px;top:268px" width="12" height="16"><polygon points="5,0.5 2,3.5 8,3.5" fill="#606060"/><polygon points="5,13.5 2,10.5 8,10.5" fill="#606060"/></svg>
<div class="t" style="left:54px;top:269px;font-size:11px;color:#555">0</div>
<div class="t" style="left:119px;top:271px;font-size:11px;color:#a0a0a0">m</div>
<div class="a" style="left:240px;top:265px;width:25px;height:24px;background:#d3d3d3;border:1px solid #c6c6c6"></div>
<div class="a" style="left:272px;top:265px;width:25px;height:24px;background:#d3d3d3;border:1px solid #c6c6c6"></div>
<svg style="left:240px;top:265px" width="60" height="26">
<rect x="5" y="4.5" width="9" height="4" rx="1" fill="#d8d8d8" stroke="#a8a8a8" stroke-width="0.9"/>
<rect x="6.5" y="8" width="10" height="4" rx="1" fill="#d8d8d8" stroke="#a8a8a8" stroke-width="0.9"/>
<rect x="8.5" y="11.5" width="11" height="6" rx="1" fill="#ececec" stroke="#a0a0a0" stroke-width="0.9"/>
<path d="M38,12 V9.5 A4.5,4.5 0 0 1 47,9.5 V12" fill="none" stroke="#b8b8b8" stroke-width="2.2"/>
<rect x="36" y="12" width="13" height="9" rx="1.5" fill="#b8b8b8"/>
<circle cx="42.5" cy="16.3" r="1.2" fill="#cfcfcf"/>
</svg>
<svg style="left:14px;top:299px" width="12" height="12"><polygon points="2,2 2,9.5 6.5,5.75" fill="#6a6a6a"/></svg>
<div class="a" style="left:21px;top:304px;width:45px;height:201px;background:linear-gradient(90deg,#ebebcc,#fdfde6 50%,#ebebcc);border:1px solid #b0b0a0;border-top:1px solid #6a6a6a"></div>
<div class="a" style="left:68px;top:304px;width:12px;height:201px;border-top:1px solid #b8b8b8;border-right:1px solid #b8b8b8;border-bottom:1px solid #b8b8b8"></div>
<div class="t" style="left:83px;top:300px;font-size:9px;color:#b4b4b4">0</div>
<div class="t" style="left:83px;top:500px;font-size:9.5px;color:#b4b4b4;letter-spacing:1px">20 m</div>
<div class="a" style="left:12px;top:526px;width:286px;height:29px;background:#70757e;border-right:1px solid #000;border-bottom:1px solid #000"></div>
<svg style="left:17px;top:537.5px" width="12" height="8"><polygon points="0.5,0.5 10,0.5 5.25,5.5" fill="#fff"/></svg>
<div class="t" style="left:35px;top:533.5px;font-size:11.6px;font-weight:bold;color:#fff;line-height:14px">View Controls</div>
<div class="a" style="left:12px;top:560px;width:286px;height:568px;background:#fff;border:1px solid #9ea3aa"></div>
<svg style="left:0;top:0" width="310" height="640"><path d="M27.5,575 V625.5 H40 M32,571.5 H40 M32,589.5 H40 M32,607.5 H40" fill="none" stroke="#8a8a8a" stroke-width="1" stroke-dasharray="1,1"/><rect x="23.5" y="567.5" width="8" height="8" fill="#f2f2f2" stroke="#9aa0aa" stroke-width="1"/><path d="M25.5,571.5 H29.5 M27.5,569.5 V573.5" stroke="#2a3f8a" stroke-width="1"/><rect x="23.5" y="585.5" width="8" height="8" fill="#f2f2f2" stroke="#9aa0aa" stroke-width="1"/><path d="M25.5,589.5 H29.5 M27.5,587.5 V591.5" stroke="#2a3f8a" stroke-width="1"/><rect x="23.5" y="603.5" width="8" height="8" fill="#f2f2f2" stroke="#9aa0aa" stroke-width="1"/><path d="M25.5,607.5 H29.5 M27.5,605.5 V609.5" stroke="#2a3f8a" stroke-width="1"/><rect x="40.5" y="565.5" width="12" height="12" fill="#fff" stroke="#333" stroke-width="1"/><path d="M42.5,571.5 L45.5,574.5 L50.5,568.0" fill="none" stroke="#333" stroke-width="1.1"/><rect x="40.5" y="583.5" width="12" height="12" fill="#fff" stroke="#333" stroke-width="1"/><path d="M42.5,589.5 L45.5,592.5 L50.5,586.0" fill="none" stroke="#333" stroke-width="1.1"/><rect x="40.5" y="601.5" width="12" height="12" fill="#fff" stroke="#333" stroke-width="1"/><path d="M42.5,607.5 L45.5,610.5 L50.5,604.0" fill="none" stroke="#333" stroke-width="1.1"/><rect x="40.5" y="619.5" width="12" height="12" fill="#fff" stroke="#333" stroke-width="1"/>
<rect x="57" y="573.2" width="16" height="5.4" fill="#b8def6"/>
<polygon points="61,565.8 69,565.8 65,569.6" fill="#1a64c8"/>
<rect x="57" y="570.4" width="16" height="1.4" fill="#1a64c8"/><rect x="60" y="573.3" width="10" height="1.2" fill="#1a64c8"/><rect x="62" y="576" width="6" height="1.2" fill="#1a64c8"/>
<polygon points="60.5,585.5 69.5,585.5 73,594 57,594" fill="#ecd0a6" stroke="#6a5a48" stroke-width="0.8"/>
<path d="M59.3,588.3 H70.7 M58.2,591.2 H71.8" stroke="#6a5a48" stroke-width="0.8"/>
<polygon points="65,600 73,604 73,612 65,616 57,612 57,604" fill="#8a7a60"/>
<polygon points="65,600 73,604 65,608 57,604" fill="#9aaa60"/>
<polygon points="57,604 65,608 65,611 57,607" fill="#d8cca8"/><polygon points="73,604 65,608 65,611 73,607" fill="#c8bc98"/>
<rect x="57" y="618" width="16" height="15" fill="#111"/>
<rect x="58" y="619" width="14" height="4" fill="#b8e62a"/>
<polygon points="58,619 64,619 72,625 72,627 58,627" fill="#e8b890"/>
<rect x="58" y="627" width="14" height="3.5" fill="#e83a18"/>
<rect x="58" y="630" width="14" height="2" fill="#f0c800"/>
</svg>
<div class="t" style="left:77px;top:565px;font-size:10.6px;color:#111;line-height:13px">Piezometric Lines</div>
<div class="t" style="left:77px;top:583px;font-size:10.6px;color:#111;line-height:13px">Embankments</div>
<div class="t" style="left:77px;top:601px;font-size:10.6px;color:#111;line-height:13px">Soil Column</div>
<div class="t" style="left:77px;top:619px;font-size:10.6px;color:#111;line-height:13px">Draw Materials on all Queries</div>
<div class="a" style="left:309px;top:160px;width:808px;height:932px;background:#fff;border-top:2px solid #6a6a6a;border-left:2px solid #6a6a6a;border-right:2px solid #f2f2f2;border-bottom:1px solid #f0f0f0"></div>
<div class="a" style="left:309px;top:160px;width:806px;height:1px;background:#a8a8a8"></div>
<div class="a" style="left:309px;top:160px;width:1px;height:930px;background:#a8a8a8"></div>
<div class="a" style="left:1116px;top:160px;width:3px;height:931px;background:#efefef"></div>
<svg style="left:0;top:0" width="1920" height="1160"><path d="M329.5,162 V1072.5 H1114" fill="none" stroke="#000" stroke-width="1"/><path d="M326,1062.5 H328 M326,1051.5 H328 M326,1039.5 H328 M323,1027.5 H328 M326,1015.5 H328 M326,1004.5 H328 M326,992.5 H328 M326,980.5 H328 M323,969.5 H328 M326,957.5 H328 M326,945.5 H328 M326,934.5 H328 M326,922.5 H328 M323,910.5 H328 M326,898.5 H328 M326,887.5 H328 M326,875.5 H328 M326,863.5 H328 M323,852.5 H328 M326,840.5 H328 M326,828.5 H328 M326,816.5 H328 M326,805.5 H328 M323,793.5 H328 M326,781.5 H328 M326,770.5 H328 M326,758.5 H328 M326,746.5 H328 M323,735.5 H328 M326,723.5 H328 M326,711.5 H328 M326,699.5 H328 M326,688.5 H328 M323,676.5 H328 M326,664.5 H328 M326,653.5 H328 M326,641.5 H328 M326,629.5 H328 M323,618.5 H328 M326,606.5 H328 M326,594.5 H328 M326,582.5 H328 M326,571.5 H328 M323,559.5 H328 M326,547.5 H328 M326,536.5 H328 M326,524.5 H328 M326,512.5 H328 M323,500.5 H328 M326,489.5 H328 M326,477.5 H328 M326,465.5 H328 M326,454.5 H328 M323,442.5 H328 M326,430.5 H328 M326,419.5 H328 M326,407.5 H328 M326,395.5 H328 M323,383.5 H328 M326,372.5 H328 M326,360.5 H328 M326,348.5 H328 M326,337.5 H328 M323,325.5 H328 M326,313.5 H328 M326,301.5 H328 M326,290.5 H328 M326,278.5 H328 M323,266.5 H328 M326,255.5 H328 M326,243.5 H328 M326,231.5 H328 M326,220.5 H328 M323,208.5 H328 M326,196.5 H328 M326,184.5 H328 M326,173.5 H328 M333.5,1074 V1076 M345.5,1074 V1076 M357.5,1074 V1076 M368.5,1074 V1079 M380.5,1074 V1076 M392.5,1074 V1076 M403.5,1074 V1076 M415.5,1074 V1076 M427.5,1074 V1079 M439.5,1074 V1076 M450.5,1074 V1076 M462.5,1074 V1076 M474.5,1074 V1076 M485.5,1074 V1079 M497.5,1074 V1076 M509.5,1074 V1076 M521.5,1074 V1076 M532.5,1074 V1076 M544.5,1074 V1079 M556.5,1074 V1076 M567.5,1074 V1076 M579.5,1074 V1076 M591.5,1074 V1076 M602.5,1074 V1079 M614.5,1074 V1076 M626.5,1074 V1076 M638.5,1074 V1076 M649.5,1074 V1076 M661.5,1074 V1079 M673.5,1074 V1076 M684.5,1074 V1076 M696.5,1074 V1076 M708.5,1074 V1076 M720.5,1074 V1079 M731.5,1074 V1076 M743.5,1074 V1076 M755.5,1074 V1076 M766.5,1074 V1076 M778.5,1074 V1079 M790.5,1074 V1076 M801.5,1074 V1076 M813.5,1074 V1076 M825.5,1074 V1076 M837.5,1074 V1079 M848.5,1074 V1076 M860.5,1074 V1076 M872.5,1074 V1076 M883.5,1074 V1076 M895.5,1074 V1079 M907.5,1074 V1076 M918.5,1074 V1076 M930.5,1074 V1076 M942.5,1074 V1076 M954.5,1074 V1079 M965.5,1074 V1076 M977.5,1074 V1076 M989.5,1074 V1076 M1000.5,1074 V1076 M1012.5,1074 V1079 M1024.5,1074 V1076 M1036.5,1074 V1076 M1047.5,1074 V1076 M1059.5,1074 V1076 M1071.5,1074 V1079 M1082.5,1074 V1076 M1094.5,1074 V1076 M1106.5,1074 V1076 " stroke="#000" stroke-width="1"/><text x="368.8" y="1087" text-anchor="middle" font-family="Liberation Sans" font-size="9.6" fill="#000">-150</text><text transform="translate(321.3,969.2) rotate(-90)" x="0" y="0" text-anchor="middle" font-family="Liberation Sans" font-size="9.2" fill="#000">-150</text><text x="485.9" y="1087" text-anchor="middle" font-family="Liberation Sans" font-size="9.6" fill="#000">-100</text><text transform="translate(321.3,852.1) rotate(-90)" x="0" y="0" text-anchor="middle" font-family="Liberation Sans" font-size="9.2" fill="#000">-100</text><text x="603.0" y="1087" text-anchor="middle" font-family="Liberation Sans" font-size="9.6" fill="#000">-50</text><text transform="translate(321.3,735.0) rotate(-90)" x="0" y="0" text-anchor="middle" font-family="Liberation Sans" font-size="9.2" fill="#000">-50</text><text x="720.0" y="1087" text-anchor="middle" font-family="Liberation Sans" font-size="9.6" fill="#000">0</text><text transform="translate(321.3,618.0) rotate(-90)" x="0" y="0" text-anchor="middle" font-family="Liberation Sans" font-size="9.2" fill="#000">0</text><text x="837.0" y="1087" text-anchor="middle" font-family="Liberation Sans" font-size="9.6" fill="#000">50</text><text transform="translate(321.3,500.9) rotate(-90)" x="0" y="0" text-anchor="middle" font-family="Liberation Sans" font-size="9.2" fill="#000">50</text><text x="954.1" y="1087" text-anchor="middle" font-family="Liberation Sans" font-size="9.6" fill="#000">100</text><text transform="translate(321.3,383.9) rotate(-90)" x="0" y="0" text-anchor="middle" font-family="Liberation Sans" font-size="9.2" fill="#000">100</text><text x="1071.2" y="1087" text-anchor="middle" font-family="Liberation Sans" font-size="9.6" fill="#000">150</text><text transform="translate(321.3,266.8) rotate(-90)" x="0" y="0" text-anchor="middle" font-family="Liberation Sans" font-size="9.2" fill="#000">150</text><path d="M602.5,208.5 V1027.5 M838.5,208.5 V1027.5 M486.5,325.5 H954.5 M486.5,910.5 H954.5" stroke="#ffc8b4" stroke-width="1"/><path d="M720.5,329.5 V906.5" stroke="#b4b4b4" stroke-width="1" stroke-dasharray="3,3"/><polygon points="602.5,208.5 838.5,208.5 954.5,325.5 954.5,910.5 838.5,1027.5 602.5,1027.5 486.5,910.5 486.5,325.5" fill="none" stroke="#a82c00" stroke-width="1.1"/><circle cx="720.5" cy="325.5" r="3" fill="#fff" stroke="#aaa" stroke-width="1"/><circle cx="720.5" cy="910.5" r="3" fill="#fff" stroke="#aaa" stroke-width="1"/></svg>
<div class="a" style="left:723px;top:913px;width:105px;height:20px;background:#fff;border:1px solid #000"></div>
<div class="t" style="left:726px;top:917px;font-size:10.4px;color:#000">Embankment Load 1</div>
<div class="a" style="left:1119px;top:160px;width:795px;height:931px;background:#fff;border-top:2px solid #6a6a6a;border-left:2px solid #6a6a6a;border-right:1px solid #f2f2f2;border-bottom:1px solid #f0f0f0"></div>
<div class="a" style="left:1119px;top:160px;width:794px;height:1px;background:#a8a8a8"></div>
<div class="a" style="left:1119px;top:160px;width:1px;height:930px;background:#a8a8a8"></div>
<svg style="left:0;top:0" width="1920" height="1160"><polygon points="1210.7,741.2 1616.6,869.3 1615.8,881.0 1212.0,752.5" fill="#f3f2dc"/><polygon points="1616.6,869.3 1796.9,508.6 1797.5,516.0 1615.8,881.0" fill="#f3f2dc"/><path d="M1212,752.5 L1615.8,881 L1797.5,516" fill="none" stroke="#8c8800" stroke-width="1.3"/><path d="M1616.6,869.3 L1615.8,881 M1210.7,741.2 L1212,752.5" fill="none" stroke="#b0ac40" stroke-width="1"/><defs><linearGradient id="slabg" gradientUnits="userSpaceOnUse" x1="0" y1="410" x2="0" y2="870"><stop offset="0" stop-color="#e7e5b1"/><stop offset="1" stop-color="#f0eeba"/></linearGradient></defs><polygon points="1434.4,410.3 1796.9,508.6 1616.6,869.3 1210.7,741.2" fill="url(#slabg)"/><path d="M1219.7,739.2 L1435.4,421.3 L1788.9,517.6" fill="none" stroke="#d9d99a" stroke-width="1.2"/><path d="M1212.7,740.2 L1434.4,412.3 L1794.9,510.6" fill="none" stroke="#c4c4b4" stroke-width="1"/><path d="M1210.7,741.2 L1434.4,410.3 L1796.9,508.6" fill="none" stroke="#000" stroke-width="1.1"/><path d="M1210.7,742.8000000000001 L1616.6,870.9 L1798.4,509.6" fill="none" stroke="#0000f0" stroke-width="1.4"/><path d="M1210.7,741.2 L1616.6,869.3 L1796.9,508.6" fill="none" stroke="#000" stroke-width="1.5"/><polygon points="1484.2,541.3 1532.2,527.3 1599.2,546.7 1620.9,579.3 1551.2,704.2 1500.5,718.7 1429.0,697.9 1410.0,661.7" fill="#f3f3f3"/><polygon points="1518.6,546.7 1586.5,565.7 1515.9,689.8 1443.5,668.9" fill="#f1f1f1"/><polygon points="1484.2,541.3 1532.2,527.3 1518.6,546.7" fill="#d9d9d9"/><polygon points="1410.0,661.7 1443.5,668.9 1429.0,697.9" fill="#d9d9d9"/><polygon points="1532.2,527.3 1599.2,546.7 1586.5,565.7 1518.6,546.7" fill="#efefef"/><polygon points="1484.2,541.3 1532.2,527.3 1599.2,546.7 1620.9,579.3 1551.2,704.2 1500.5,718.7 1429.0,697.9 1410.0,661.7" fill="none" stroke="#a02c10" stroke-width="1.2"/><path d="M1484.2,541.3 L1518.6,546.7 L1586.5,565.7 L1620.9,579.3 M1532.2,527.3 L1518.6,546.7 L1443.5,668.9 L1429,697.9 M1599.2,546.7 L1586.5,565.7 L1515.9,689.8 L1500.5,718.7 M1410,661.7 L1443.5,668.9 L1515.9,689.8 L1551.2,704.2 " fill="none" stroke="#a02c10" stroke-width="1.2"/><path d="M1210.7,741.2 L1218,808" stroke="#008000" stroke-width="1.2"/><polygon points="1214.5,802 1221.5,801.5 1218.5,812" fill="#008000"/><text x="1217.5" y="823" font-family="Liberation Sans" font-size="9" fill="#008000">Z</text><path d="M1210.7,741.2 L1300,770" stroke="#ff0000" stroke-width="1.3"/><polygon points="1296,764.5 1309,772 1295,773.5" fill="#ff0000"/><text x="1322" y="777" font-family="Liberation Sans" font-size="8" fill="#ff2020">Y</text><path d="M1210.7,741.2 L1259.3,669" stroke="#0000f0" stroke-width="1.5"/><polygon points="1226,712.5 1234,712 1232,708" fill="#0000f0"/><polygon points="1250.5,676 1259,669.5 1255,673" fill="#0000f0"/><polygon points="1250.5,676 1256,675 1258,670" fill="#0000f0"/><text x="1264.5" y="659" font-family="Liberation Sans" font-size="9" fill="#2020ff">Y</text><polygon points="1781,531 1788,532 1784,537" fill="#0000f0"/><path d="M1789,223 L1878.7,244" stroke="#ff7070" stroke-width="1.6"/><polygon points="1866.2,206.1 1851.6,232.0 1848.1,270.8 1862.8,243.0" fill="#d8b4b4" stroke="#b0b0b0" stroke-width="1"/><polygon points="1820.5,195.3 1866.2,206.1 1851.6,232.0 1805.4,221.2" fill="#b4d8b4" stroke="#b0b0b0" stroke-width="1"/><polygon points="1805.4,221.2 1851.6,232.0 1848.1,270.8 1801.6,260.0" fill="#c6c6f0" stroke="#b0b0b0" stroke-width="1"/><path d="M1838.2,194.5 L1830.9,271" stroke="#60b060" stroke-width="1.2" opacity="0.35"/><path d="M1838.2,194.5 L1836.5,213" stroke="#60b060" stroke-width="1.6"/><path d="M1831.8,262 L1830.9,271" stroke="#60b060" stroke-width="1.4"/><path d="M1804.5,226.5 L1850,238" stroke="#ff8080" stroke-width="1.2" opacity="0.45"/><path d="M1849,207.4 L1826.5,248.3" stroke="#6060ff" stroke-width="1" opacity="0.35"/><path d="M1826.5,248.3 L1819.7,259.1" stroke="#5050ff" stroke-width="1.4"/><path d="M1850,238 L1878.7,244" stroke="#ff6060" stroke-width="1.6"/><text transform="translate(1826,209) rotate(13)" font-family="Liberation Mono" font-size="9.5" fill="#6a6a6a" textLength="21" lengthAdjust="spacingAndGlyphs">Top</text><text transform="translate(1807,244) rotate(13)" font-family="Liberation Mono" font-size="10.5" fill="#5a5a5a" textLength="37" lengthAdjust="spacingAndGlyphs">Front</text><text x="1887" y="247" font-family="Liberation Sans" font-size="9" fill="#ff6060">X</text><text x="1849.5" y="203" font-family="Liberation Sans" font-size="8" fill="#6060ff">Y</text><text x="1828.5" y="279" font-family="Liberation Sans" font-size="8" fill="#60b060">Z</text></svg>
<div class="a" style="left:309px;top:1092px;width:1606px;height:42px;background:#f0f0f0"></div>
<div class="a" style="left:309px;top:1133px;width:1606px;height:1px;background:#a0a0a0"></div>
<div class="a" style="left:0;top:1140px;width:1920px;height:20px;background:#fff"></div>
<div class="t" style="left:3px;top:1146px;font-size:11px;color:#222">Ready</div>
<div class="a" style="left:1531px;top:1142px;width:98px;height:18px;background:#cae3f5"></div>
<div class="a" style="left:1631px;top:1142px;width:36px;height:18px;background:#cae3f5"></div>
<div class="a" style="left:1699px;top:1142px;width:46px;height:18px;background:#cae3f5"></div>
<div class="a" style="left:1759px;top:1113px;width:134px;height:20px;background:#fff;border:1px solid #000;box-shadow:inset 1px 1px 0 #000"></div>
<svg style="left:0;top:0" width="1920" height="1160"><text x="1539.3" y="1154.4" textLength="77.4" lengthAdjust="spacingAndGlyphs" font-family="Liberation Sans" font-size="11" fill="#111" xml:space="preserve">MAX DATATIPS</text><text x="1634" y="1154.4" textLength="29.3" lengthAdjust="spacingAndGlyphs" font-family="Liberation Sans" font-size="11" fill="#111" xml:space="preserve">SNAP</text><text x="1670" y="1154.4" textLength="25" lengthAdjust="spacingAndGlyphs" font-family="Liberation Sans" font-size="11" fill="#a8a8a8" xml:space="preserve">GRID</text><text x="1702.7" y="1154.4" textLength="38" lengthAdjust="spacingAndGlyphs" font-family="Liberation Sans" font-size="11" fill="#111" xml:space="preserve">ORTHO</text><text x="1748.3" y="1154.4" textLength="37.7" lengthAdjust="spacingAndGlyphs" font-family="Liberation Sans" font-size="11" fill="#a8a8a8" xml:space="preserve">OSNAP</text><text x="1813.3" y="1154.4" textLength="85" lengthAdjust="spacingAndGlyphs" font-family="Liberation Sans" font-size="11" fill="#111" xml:space="preserve">-51.823,  153.642</text><path d="M309,1092.5 H1915" stroke="#000" stroke-width="1.2"/><path d="M309,1109.5 H1915" stroke="#a0a0a0" stroke-width="1"/><rect x="309" y="1093" width="20" height="17" fill="#f0f0f0"/><path d="M328,1093 V1110 H309" fill="none" stroke="#a0a0a0" stroke-width="2"/><path d="M309.5,1110 V1093.5 H327" fill="none" stroke="#fff" stroke-width="1"/><rect x="330" y="1093" width="20" height="17" fill="#f0f0f0"/><path d="M349,1093 V1110 H330" fill="none" stroke="#a0a0a0" stroke-width="2"/><path d="M330.5,1110 V1093.5 H348" fill="none" stroke="#fff" stroke-width="1"/><rect x="351" y="1093" width="20" height="17" fill="#f0f0f0"/><path d="M370,1093 V1110 H351" fill="none" stroke="#a0a0a0" stroke-width="2"/><path d="M351.5,1110 V1093.5 H369" fill="none" stroke="#fff" stroke-width="1"/><rect x="372" y="1093" width="20" height="17" fill="#f0f0f0"/><path d="M391,1093 V1110 H372" fill="none" stroke="#a0a0a0" stroke-width="2"/><path d="M372.5,1110 V1093.5 H390" fill="none" stroke="#fff" stroke-width="1"/><rect x="393" y="1093" width="20" height="17" fill="#f0f0f0"/><path d="M412,1093 V1110 H393" fill="none" stroke="#a0a0a0" stroke-width="2"/><path d="M393.5,1110 V1093.5 H411" fill="none" stroke="#fff" stroke-width="1"/><rect x="315" y="1097" width="1.5" height="9" fill="#000"/><polygon points="322.5,1097 322.5,1106 317,1101.5" fill="#000"/><polygon points="342,1097.5 342,1105.5 337,1101.5" fill="#a8a8a8"/><text x="356.5" y="1106" font-family="Liberation Sans" font-weight="bold" font-size="11" fill="#000">#</text><polygon points="378.5,1097 378.5,1106 384,1101.5" fill="#000"/><polygon points="399,1097 399,1106 404.5,1101.5" fill="#000"/><rect x="405" y="1097" width="1.5" height="9" fill="#000"/><clipPath id="tabclip"><rect x="413" y="1090" width="1502" height="25"/></clipPath><g clip-path="url(#tabclip)"><polygon points="514.1,1093 629.6999999999999,1093 621.4,1109.5 522.4,1109.5" fill="#efefef"/><path d="M522.4,1109.5 H621.4" stroke="#a0a0a0" stroke-width="1"/><path d="M514.1,1093 L522.4,1109.5 M621.4,1109.5 L629.6999999999999,1093" fill="none" stroke="#000" stroke-width="1" shape-rendering="crispEdges"/><text x="529.4" y="1104.5" textLength="85" lengthAdjust="spacingAndGlyphs" font-family="Liberation Sans" font-size="11" fill="#000">Stage 2 = 30 d</text><polygon points="622.4000000000001,1093 744.3,1093 736.0,1109.5 630.7,1109.5" fill="#efefef"/><path d="M630.7,1109.5 H736.0" stroke="#a0a0a0" stroke-width="1"/><path d="M622.4000000000001,1093 L630.7,1109.5 M736.0,1109.5 L744.3,1093" fill="none" stroke="#000" stroke-width="1" shape-rendering="crispEdges"/><text x="637.7" y="1104.5" textLength="91.3" lengthAdjust="spacingAndGlyphs" font-family="Liberation Sans" font-size="11" fill="#000">Stage 3 = 150 d</text><polygon points="738.6,1093 860.4999999999999,1093 852.1999999999999,1109.5 746.9,1109.5" fill="#efefef"/><path d="M746.9,1109.5 H852.1999999999999" stroke="#a0a0a0" stroke-width="1"/><path d="M738.6,1093 L746.9,1109.5 M852.1999999999999,1109.5 L860.4999999999999,1093" fill="none" stroke="#000" stroke-width="1" shape-rendering="crispEdges"/><text x="753.9" y="1104.5" textLength="91.3" lengthAdjust="spacingAndGlyphs" font-family="Liberation Sans" font-size="11" fill="#000">Stage 4 = 180 d</text><polygon points="854.3000000000001,1093 976.3,1093 968.0,1109.5 862.6,1109.5" fill="#efefef"/><path d="M862.6,1109.5 H968.0" stroke="#a0a0a0" stroke-width="1"/><path d="M854.3000000000001,1093 L862.6,1109.5 M968.0,1109.5 L976.3,1093" fill="none" stroke="#000" stroke-width="1" shape-rendering="crispEdges"/><text x="869.6" y="1104.5" textLength="91.4" lengthAdjust="spacingAndGlyphs" font-family="Liberation Sans" font-size="11" fill="#000">Stage 5 = 280 d</text><polygon points="970.5,1093 1092.3,1093 1084.0,1109.5 978.8,1109.5" fill="#efefef"/><path d="M978.8,1109.5 H1084.0" stroke="#a0a0a0" stroke-width="1"/><path d="M970.5,1093 L978.8,1109.5 M1084.0,1109.5 L1092.3,1093" fill="none" stroke="#000" stroke-width="1" shape-rendering="crispEdges"/><text x="985.8" y="1104.5" textLength="91.2" lengthAdjust="spacingAndGlyphs" font-family="Liberation Sans" font-size="11" fill="#000">Stage 6 = 460 d</text><polygon points="1086.3,1093 1208.3,1093 1200.0,1109.5 1094.6,1109.5" fill="#efefef"/><path d="M1094.6,1109.5 H1200.0" stroke="#a0a0a0" stroke-width="1"/><path d="M1086.3,1093 L1094.6,1109.5 M1200.0,1109.5 L1208.3,1093" fill="none" stroke="#000" stroke-width="1" shape-rendering="crispEdges"/><text x="1101.6" y="1104.5" textLength="91.4" lengthAdjust="spacingAndGlyphs" font-family="Liberation Sans" font-size="11" fill="#000">Stage 7 = 690 d</text><polygon points="1202.4,1093 1324.5,1093 1316.2,1109.5 1210.7,1109.5" fill="#efefef"/><path d="M1210.7,1109.5 H1316.2" stroke="#a0a0a0" stroke-width="1"/><path d="M1202.4,1093 L1210.7,1109.5 M1316.2,1109.5 L1324.5,1093" fill="none" stroke="#000" stroke-width="1" shape-rendering="crispEdges"/><text x="1217.7" y="1104.5" textLength="91.5" lengthAdjust="spacingAndGlyphs" font-family="Liberation Sans" font-size="11" fill="#000">Stage 8 = 790 d</text><polygon points="1318.0,1093 1441.0,1093 1432.7,1109.5 1326.3,1109.5" fill="#efefef"/><path d="M1326.3,1109.5 H1432.7" stroke="#a0a0a0" stroke-width="1"/><path d="M1318.0,1093 L1326.3,1109.5 M1432.7,1109.5 L1441.0,1093" fill="none" stroke="#000" stroke-width="1" shape-rendering="crispEdges"/><text x="1333.3" y="1104.5" textLength="92.4" lengthAdjust="spacingAndGlyphs" font-family="Liberation Sans" font-size="11" fill="#000">Stage 9 = 850 d</text><polygon points="1435.4,1093 1564.3,1093 1556.0,1109.5 1443.7,1109.5" fill="#efefef"/><path d="M1443.7,1109.5 H1556.0" stroke="#a0a0a0" stroke-width="1"/><path d="M1435.4,1093 L1443.7,1109.5 M1556.0,1109.5 L1564.3,1093" fill="none" stroke="#000" stroke-width="1" shape-rendering="crispEdges"/><text x="1450.7" y="1104.5" textLength="98.3" lengthAdjust="spacingAndGlyphs" font-family="Liberation Sans" font-size="11" fill="#000">Stage 10 = 990 d</text><polygon points="1559.4,1093 1695.6,1093 1687.3,1109.5 1567.7,1109.5" fill="#efefef"/><path d="M1567.7,1109.5 H1687.3" stroke="#a0a0a0" stroke-width="1"/><path d="M1559.4,1093 L1567.7,1109.5 M1687.3,1109.5 L1695.6,1093" fill="none" stroke="#000" stroke-width="1" shape-rendering="crispEdges"/><text x="1574.7" y="1104.5" textLength="105.6" lengthAdjust="spacingAndGlyphs" font-family="Liberation Sans" font-size="11" fill="#000">Stage 11 = 1070 d</text><polygon points="1691.4,1093 1827.6,1093 1819.3,1109.5 1699.7,1109.5" fill="#efefef"/><path d="M1699.7,1109.5 H1819.3" stroke="#a0a0a0" stroke-width="1"/><path d="M1691.4,1093 L1699.7,1109.5 M1819.3,1109.5 L1827.6,1093" fill="none" stroke="#000" stroke-width="1" shape-rendering="crispEdges"/><text x="1706.7" y="1104.5" textLength="105.6" lengthAdjust="spacingAndGlyphs" font-family="Liberation Sans" font-size="11" fill="#000">Stage 12 = 1110 d</text><polygon points="1823.4,1093 1959.6,1093 1951.3,1109.5 1831.7,1109.5" fill="#efefef"/><path d="M1831.7,1109.5 H1951.3" stroke="#a0a0a0" stroke-width="1"/><path d="M1823.4,1093 L1831.7,1109.5 M1951.3,1109.5 L1959.6,1093" fill="none" stroke="#000" stroke-width="1" shape-rendering="crispEdges"/><text x="1838.7" y="1104.5" textLength="105.6" lengthAdjust="spacingAndGlyphs" font-family="Liberation Sans" font-size="11" fill="#000">Stage 13 = 1520 d</text><polygon points="414.3,1093 521.5999999999999,1093 513.3,1109.5 422.6,1109.5" fill="#fff"/><path d="M422.6,1109.5 H513.3" stroke="#a0a0a0" stroke-width="1"/><path d="M414.3,1093 L422.6,1109.5 M513.3,1109.5 L521.5999999999999,1093" fill="none" stroke="#000" stroke-width="1" shape-rendering="crispEdges"/><text x="425.6" y="1104.5" textLength="84.4" lengthAdjust="spacingAndGlyphs" font-family="Liberation Sans" font-weight="bold" font-size="11" fill="#000">Stage 1 = 0 d</text></g></svg>
</body></html>
